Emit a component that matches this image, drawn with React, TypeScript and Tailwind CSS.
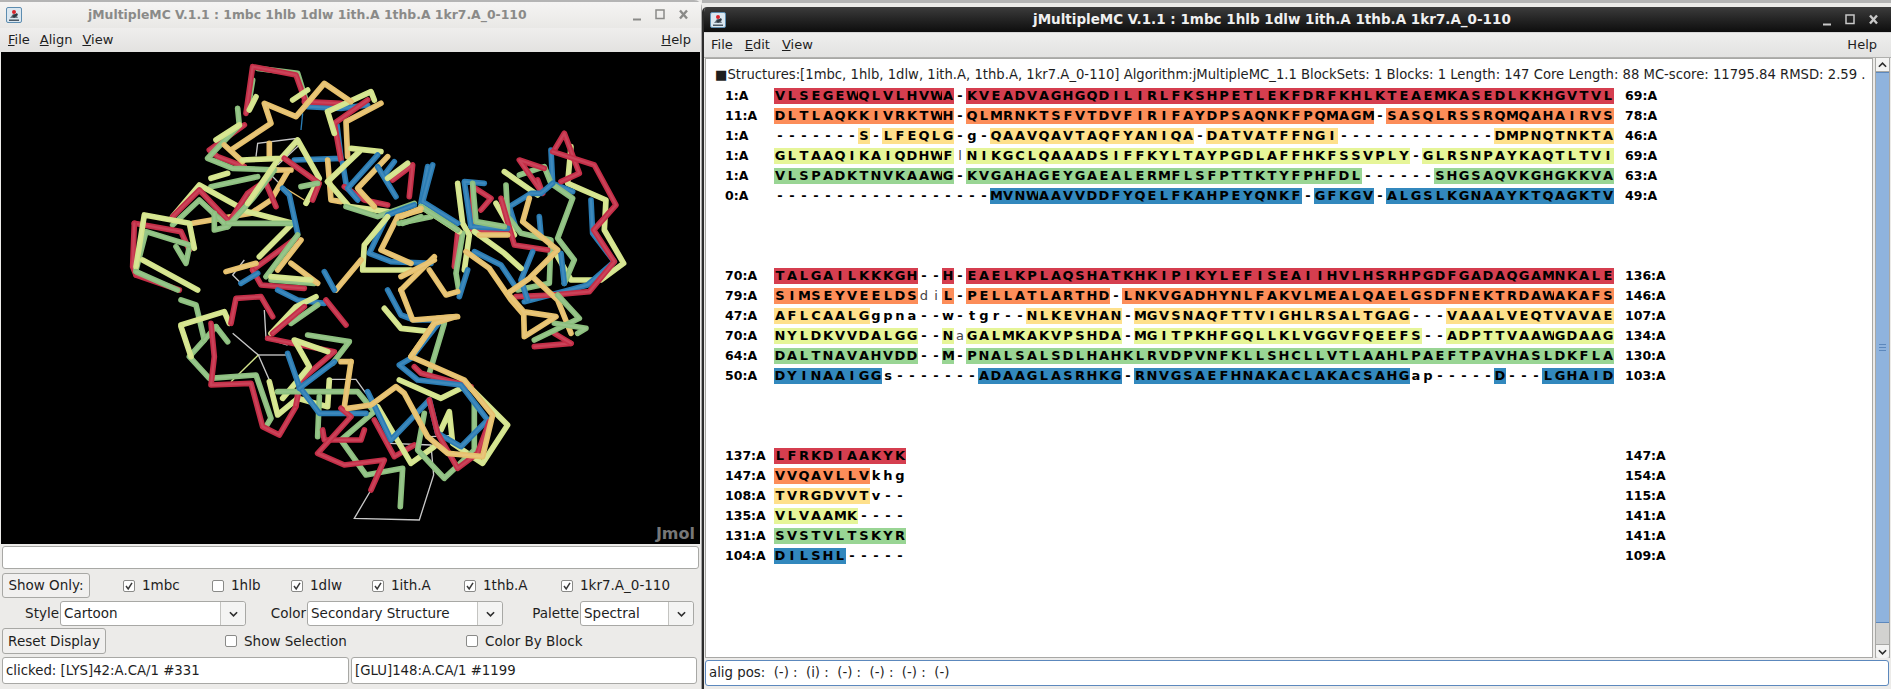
const COLORS = ['bg-[#d53e4f]', 'bg-[#fc8d59]', 'bg-[#fee08b]', 'bg-[#e6f598]', 'bg-[#99d594]', 'bg-[#3288bd]'];

// "~" marks the next residue as thin (the pale unaligned letters)
const BLOCKS = [
  {
    start: ['1:A', '11:A', '1:A', '1:A', '1:A', '0:A'],
    end: ['69:A', '78:A', '46:A', '69:A', '63:A', '49:A'],
    seqs: [
      'VLSEGEWQLVLHVWA-KVEADVAGHGQDILIRLFKSHPETLEKFDRFKHLKTEAEMKASEDLKKHGVTVL',
      'DLTLAQKKIVRKTWH-QLMRNKTSFVTDVFIRIFAYDPSAQNKFPQMAGM-SASQLRSSRQMQAHAIRVS',
      '-------S-LFEQLG-g-QAAVQAVTAQFYANIQA-DATVATFFNGI-------------DMPNQTNKTA',
      'GLTAAQIKAIQDHWF~lNIKGCLQAAADSIFFKYLTAYPGDLAFFHKFSSVPLY-GLRSNPAYKAQTLTVI',
      'VLSPADKTNVKAAWG-KVGAHAGEYGAEALERMFLSFPTTKTYFPHFDL------SHGSAQVKGHGKKVA',
      '------------------MVNWAAVVDDFYQELFKAHPEYQNKF-GFKGV-ALGSLKGNAAYKTQAGKTV',
    ],
  },
  {
    start: ['70:A', '79:A', '47:A', '70:A', '64:A', '50:A'],
    end: ['136:A', '146:A', '107:A', '134:A', '130:A', '103:A'],
    seqs: [
      'TALGAILKKKGH--H-EAELKPLAQSHATKHKIPIKYLEFISEAIIHVLHSRHPGDFGADAQGAMNKALE',
      'SIMSEYVEELDS~d~iL-PELLATLARTHD-LNKVGADHYNLFAKVLMEALQAELGSDFNEKTRDAWAKAFS',
      'AFLCAALGgpna--w-tgr--NLKEVHAN-MGVSNAQFTTVIGHLRSALTGAG---VAAALVEQTVAVAE',
      'NYLDKVVDALGG--N~aGALMKAKVPSHDA-MGITPKHFGQLLKLVGGVFQEEFS--ADPTTVAAWGDAAG',
      'DALTNAVAHVDD--M-PNALSALSDLHAHKLRVDPVNFKLLSHCLLVTLAAHLPAEFTPAVHASLDKFLA',
      'DYINAAIGGs-------ADAAGLASRHKG-RNVGSAEFHNAKACLAKACSAHGap-----D---LGHAID',
    ],
  },
  {
    start: ['137:A', '147:A', '108:A', '135:A', '131:A', '104:A'],
    end: ['147:A', '154:A', '115:A', '141:A', '141:A', '109:A'],
    seqs: ['LFRKDIAAKYK', 'VVQAVLLVkhg', 'TVRGDVVTv--', 'VLVAAMK----', 'SVSTVLTSKYR', 'DILSHL-----'],
  },
];

const R = '#c42e47';
const G = '#8cbf7e';
const T = '#e6c06c';
const Y = '#d4e48b';
const B = '#2a7cb4';
const W = '#c8c8c8';

type Strand = [string, string];

// traced from the viewer, each group in its own crop's coordinates (3x)
const TOP_LEFT: Strand[] = [
  [G, '470,55 590,70 615,150'],
  [G, '440,180 455,90'],
  [R, '435,190 455,50 585,75 612,150'],
  [B, '620,170 720,175 800,165'],
  [R, '610,155 720,160'],
  [B, '580,330 720,325 708,225'],
  [R, '800,150 700,220 720,330'],
  [Y, '680,185 810,125 820,150'],
  [Y, '680,185 700,250'],
  [T, '390,300 510,220 490,160 585,200 670,100 750,155'],
  [T, '840,160 735,215 740,320'],
  [Y, '575,150 620,120'],
  [Y, '445,180 465,140'],
  [R, '430,225 325,300 350,320 430,350'],
  [G, '410,175 415,225 320,325 395,355 530,360'],
  [Y, '345,270 415,225'],
  [T, '370,285 425,335'],
  [T, '505,280 505,320'],
  [Y, '425,330 540,325 590,270 655,385 615,460'],
  [R, '550,325 655,400 635,450'],
  [G, '600,410 650,400'],
  [G, '330,410 470,380'],
  [Y, '330,385 380,370'],
  [T, '560,365 510,450 450,490 275,520'],
  [T, '515,360 570,360'],
  [R, '495,400 525,470'],
  [Y, '215,500 295,405 440,485 575,520 475,620'],
  [R, '215,500 295,420 385,515 440,430 505,385'],
  [G, '215,525 295,450 380,530 460,440 520,360'],
  [G, '340,490 340,540 380,530'],
  [Y, '440,460 530,330'],
  [G, '380,520 580,520'],
  [B, '545,415 565,435 590,550'],
  [T, '680,330 690,450 720,455'],
  [B, '725,340 735,400'],
  [Y, '680,395 775,305'],
  [Y, '750,295 840,305'],
  [R, '730,410 790,450 860,465'],
  [Y, '680,395 745,470 860,485'],
  [B, '770,450 740,415 830,315'],
  [T, '860,320 770,415 820,470'],
  [B, '880,335 850,375'],
  [B, '830,350 885,440'],
  [R, '875,390 935,345 925,440'],
  [Y, '860,385 920,340'],
  [G, '735,470 830,500 940,460'],
  [B, '940,465 860,495 805,610 870,635 990,640'],
  [T, '960,480 890,500 840,600 930,640'],
  [G, '895,520 990,500'],
  [Y, '860,500 790,585 785,660 930,660'],
  [T, '1000,620 900,720'],
  [T, '780,630 705,720'],
  [B, '980,350 960,460'],
  [R, '100,520 240,545 265,600'],
  [R, '105,675 95,650 100,520'],
  [G, '225,590 255,640 265,590'],
  [G, '105,660 135,545 265,585'],
  [Y, '105,650 130,495 265,520 280,595'],
  [R, '105,675 235,720'],
  [Y, '125,630 290,720'],
  [G, '105,665 230,720'],
  [T, '600,570 530,660'],
  [R, '455,660 585,565'],
  [R, '455,660 480,705 610,715'],
  [G, '495,680 590,555'],
  [G, '510,690 640,700'],
  [T, '375,665 465,640'],
  [B, '420,700 470,670'],
  [T, '570,640 650,700'],
  [Y, '510,680 630,690'],
  [B, '670,665 700,720'],
];

const BOTTOM: Strand[] = [
  [G, '0,30 45,45 70,150 25,200 85,265 225,255 270,385 255,410'],
  [Y, '0,105 130,65 145,100'],
  [Y, '0,110 30,200'],
  [G, '105,110 140,155'],
  [G, '105,110 70,150'],
  [R, '150,100 165,25 240,20 275,80'],
  [R, '90,100 100,200 90,285 210,280 245,410 295,435 345,350 350,310'],
  [B, '290,0 350,30 430,40'],
  [Y, '270,130 345,50 405,20'],
  [G, '410,45 330,100'],
  [R, '275,130 370,50'],
  [R, '435,30 495,105'],
  [Y, '265,275 290,375 350,325 440,350 445,270'],
  [G, '380,135 505,155 455,220'],
  [R, '260,145 460,185 360,270 345,345'],
  [Y, '305,325 385,230 340,150 440,185'],
  [G, '290,305 530,305 580,365 480,450 555,555 665,535 658,650'],
  [G, '410,440 415,320'],
  [T, '510,215 480,215'],
  [T, '510,215 490,350'],
  [B, '320,190 355,290 415,370 555,370'],
  [B, '460,215 355,295'],
  [R, '425,420 430,450 540,450 550,420'],
  [R, '480,355 510,380 410,490 490,525 610,510 570,600'],
  [R, '580,390 640,500 700,465'],
  [Y, '590,350 690,520 760,470'],
  [B, '620,0 660,75 700,90 770,90'],
  [Y, '610,55 660,115 750,125'],
  [G, '790,100 745,250'],
  [Y, '655,270 780,325 860,285 980,405 905,520 815,460 805,365 780,420'],
  [G, '730,370 710,480 790,565 880,480 880,340'],
  [R, '700,230 720,250 870,290'],
  [B, '780,90 690,205 655,225 710,270 840,285 920,390 840,470 770,430 745,330 630,450 560,305'],
  [R, '745,330 770,430 830,535 890,490 925,395'],
  [T, '830,80 770,85 690,200 850,270 935,375 905,500 800,490 740,440 670,310 645,290 570,345 500,355'],
];

const RIGHT: Strand[] = [
  [Y, '510,80 500,190 615,240 610,330 668,430 600,480 510,480 470,410'],
  [B, '450,90 455,190 515,215'],
  [B, '570,240 575,340 640,425 560,495 505,510 370,545'],
  [R, '460,90 490,40 535,160 480,185'],
  [R, '455,95 580,135 645,255 578,330 640,425 565,515 455,525 345,530'],
  [G, '355,165 430,140 450,190 515,235 470,355 520,420 490,490'],
  [R, '410,180 425,220 355,120 430,145'],
  [Y, '310,155 410,225'],
  [B, '455,190 420,220 390,220 325,260 345,325'],
  [B, '415,290 420,345'],
  [G, '315,195 320,290 360,340 450,360 445,490 350,510'],
  [Y, '285,250 340,345'],
  [R, '300,235 340,375 440,390'],
  [B, '395,395 360,480 380,540'],
  [B, '480,400 490,490'],
  [R, '240,270 270,235 215,200 215,330 320,340'],
  [Y, '170,190 185,310 205,345 190,450'],
  [B, '250,190 190,185 210,320 320,325'],
  [G, '215,190 225,305 310,320'],
  [R, '170,340 160,440'],
  [G, '185,340 165,460 175,520'],
  [B, '220,395 300,435 340,495'],
  [B, '200,450 175,530'],
  [Y, '220,335 310,400 360,445'],
  [T, '235,345 320,345'],
  [B, '95,135 65,245 170,310'],
  [Y, '60,260 175,335'],
  [G, '5,310 60,290'],
  [G, '60,260 170,330'],
  [T, '0,290 60,265'],
  [T, '100,420 0,470'],
  [T, '85,450 135,525 170,515'],
  [T, '0,510 35,600 165,590 100,610 30,710'],
  [T, '400,475 470,540 510,640'],
  [R, '510,670 400,680'],
  [R, '510,670 460,640'],
  [G, '470,525 535,595 400,660'],
  [G, '460,610 555,625 530,640'],
  [T, '195,395 265,445 330,540 365,580'],
  [T, '385,235 365,305 470,390 385,475 320,520 368,575 370,650 465,590 365,575'],
];

const THIN_LINES: [string, string, string][] = [
  ['translate(100 -2)', W, '465,320 470,280 590,265 595,285 530,345'],
  ['translate(100 -2)', B, '600,240 605,190'],
  ['translate(100 -2)', W, '510,375 545,410'],
  ['translate(100 -2)', T, '545,410 610,450'],
  ['translate(100 -2)', W, '430,630 395,675 420,700'],
  ['translate(180 238)', W, '250,60 255,145 320,165'],
  ['translate(180 238)', W, '155,130 232,195 265,270'],
  ['translate(180 238)', Y, '232,195 150,275'],
  ['translate(180 238)', W, '232,195 320,195'],
  ['translate(180 238)', W, '445,268 525,268 555,310'],
  ['translate(180 238)', W, '625,460 750,465 758,555 715,690 520,685 570,600'],
  ['translate(180 238)', W, '750,440 805,437'],
];

function Tubes({ items, at }: { items: Strand[]; at: string }) {
  return (
    <g transform={`${at} scale(0.3333)`} fill="none" strokeLinecap="round" strokeLinejoin="round">
      {items.map(([color, points], i) => (
        <g key={i}>
          <polyline points={points} stroke={color} strokeWidth="17" />
          <polyline points={points} stroke="#ffffff" strokeOpacity="0.1" strokeWidth="7" />
        </g>
      ))}
    </g>
  );
}

function Protein() {
  return (
    <svg viewBox="0 0 700 492" className="absolute inset-0 w-[700px] h-[492px]">
      {THIN_LINES.map(([at, color, points], i) => (
        <polyline key={i} transform={`${at} scale(0.3333)`} points={points} fill="none" stroke={color} strokeWidth="4" />
      ))}
      <Tubes items={TOP_LEFT} at="translate(100 -2)" />
      <Tubes items={BOTTOM} at="translate(180 238)" />
      <Tubes items={RIGHT} at="translate(400 68)" />
    </svg>
  );
}

function AppIcon() {
  return (
    <svg viewBox="0 0 16 16" className="w-[16px] h-[16px] shrink-0">
      <rect x="0.5" y="0.5" width="15" height="15" rx="1.5" fill="#dbe7f0" stroke="#5d8db0" />
      <path d="M3 12.5h10v1.5H3z" fill="#4d5a66" />
      <path d="M4 11l3-4h3l2 4z" fill="#6f7b86" />
      <path d="M6 9l5-3 1 2-4 3z" fill="#2f3a44" />
      <circle cx="8" cy="5" r="2" fill="#d8242c" />
    </svg>
  );
}

function WindowControls({ color }: { color: string }) {
  return (
    <svg viewBox="0 0 62 12" className="w-[62px] h-[12px]" fill="none" stroke={color}>
      <path d="M0 10.5h8" strokeWidth="2" />
      <rect x="23" y="1" width="8" height="8.5" strokeWidth="1.5" />
      <path d="M47 1.5l7 8M54 1.5l-7 8" strokeWidth="2.4" />
    </svg>
  );
}

function Check({ label, checked, className }: { label: string; checked?: boolean; className: string }) {
  return (
    <div className={`flex items-center gap-[7px] ${className}`}>
      <span className="flex items-center justify-center w-[12px] h-[12px] border border-[#8a8a88] rounded-[2px] bg-white shrink-0">
        {checked && (
          <svg viewBox="0 0 10 10" className="w-[10px] h-[10px]" fill="none" stroke="#3a3a3a" strokeWidth="1.5">
            <path d="M2 5l2.2 3L8 1.8" />
          </svg>
        )}
      </span>
      <span>{label}</span>
    </div>
  );
}

function Combo({ value, className }: { value: string; className: string }) {
  return (
    <div className={`flex h-[25px] bg-white border border-[#a8a8a5] rounded-[3px] ${className}`}>
      <span className="flex-1 pl-[3px] leading-[23px] overflow-hidden whitespace-nowrap">{value}</span>
      <span className="flex items-center justify-center w-[25px] border-l border-[#c4c4c1] bg-[#f4f4f3] rounded-r-[3px]">
        <svg viewBox="0 0 10 6" className="w-[9px] h-[6px]" fill="none" stroke="#2e2e2e" strokeWidth="1.8">
          <path d="M1 1l4 4 4-4" />
        </svg>
      </span>
    </div>
  );
}

function Field({ value, className }: { value?: string; className: string }) {
  return (
    <div className={`bg-white border border-[#a8a8a5] rounded-[3px] px-[3px] flex items-center whitespace-nowrap ${className}`}>
      {value}
    </div>
  );
}

function SeqRow({ seq, color, start, end }: { seq: string; color: string; start: string; end: string }) {
  const cells: { ch: string; thin: boolean }[] = [];
  let thin = false;
  for (const ch of seq) {
    if (ch === '~') {
      thin = true;
      continue;
    }
    cells.push({ ch, thin });
    thin = false;
  }
  return (
    <div className="flex h-[20px] text-[12.5px] font-bold text-black leading-[16px]">
      <span className="w-[68px] pl-[19px] whitespace-nowrap">{start}</span>
      <div className="flex w-[840px]">
        {cells.map((cell, i) => {
          const aligned = /[A-Z]/.test(cell.ch);
          return (
            <span
              key={i}
              className={`w-[12px] h-[16px] text-center shrink-0 text-[13px] ${aligned ? color : ''} ${cell.thin ? 'font-normal text-[#444]' : ''}`}
            >
              {cell.ch}
            </span>
          );
        })}
      </div>
      <span className="ml-[11px] whitespace-nowrap">{end}</span>
    </div>
  );
}

export default function App() {
  return (
    <div className="flex w-[1891px] h-[689px] bg-[#ecebe9] text-[13.5px] text-[#1e1e1e] font-['DejaVu_Sans',sans-serif] overflow-hidden">
      {/* ── Left window: Jmol viewer ───────────────────────── */}
      <div className="flex flex-col w-[702px] shrink-0 border-t-[2px] border-[#b4b4b4] rounded-tr-[8px] border-r border-r-[#a5a5a5]">
        <div className="flex items-center h-[26px] px-[6px] bg-gradient-to-b from-[#f5f4f3] to-[#e9e8e6]">
          <AppIcon />
          <span className="ml-[66px] w-[500px] font-bold text-[12.4px] text-[#8a8a88] whitespace-nowrap">
            jMultipleMC V.1.1 : 1mbc 1hlb 1dlw 1ith.A 1thb.A 1kr7.A_0-110
          </span>
          <div className="ml-auto">
            <WindowControls color="#8a8a88" />
          </div>
        </div>
        <div className="flex items-center gap-[10px] h-[24px] px-[8px] text-[13px] bg-gradient-to-b from-[#efeeed] to-[#e3e2e0]">
          <span><span className="underline">F</span>ile</span>
          <span><span className="underline">A</span>lign</span>
          <span><span className="underline">V</span>iew</span>
          <span className="ml-auto mr-[2px]"><span className="underline">H</span>elp</span>
        </div>
        <div className="relative h-[492px] bg-black overflow-hidden mx-[1px]">
          <Protein />
          <span className="absolute right-[5px] bottom-[-2px] font-bold text-[16px] text-[#777]">Jmol</span>
        </div>
        <Field className="h-[23px] mt-[2px] ml-[2px] mr-[2px]" />
        <div className="flex items-center h-[25px] mt-[4px] ml-[2px]">
          <button className="w-[88px] h-[25px] border border-[#a8a8a5] rounded-[3px] bg-[#f1f0ef]">Show Only:</button>
          <Check label="1mbc" checked className="w-[89px] ml-[33px]" />
          <Check label="1hlb" className="w-[79px]" />
          <Check label="1dlw" checked className="w-[81px]" />
          <Check label="1ith.A" checked className="w-[92px]" />
          <Check label="1thb.A" checked className="w-[97px]" />
          <Check label="1kr7.A_0-110" checked />
        </div>
        <div className="flex items-center h-[25px] mt-[3px]">
          <span className="w-[60px] text-right pr-[1px]">Style</span>
          <Combo value="Cartoon" className="w-[186px]" />
          <span className="w-[61px] text-right pr-[1px]">Color</span>
          <Combo value="Secondary Structure" className="w-[196px]" />
          <span className="w-[77px] text-right pr-[1px]">Palette</span>
          <Combo value="Spectral" className="w-[114px]" />
        </div>
        <div className="flex items-center h-[26px] mt-[2px] ml-[2px]">
          <button className="w-[104px] h-[26px] border border-[#a8a8a5] rounded-[3px] bg-[#f1f0ef]">Reset Display</button>
          <Check label="Show Selection" className="w-[241px] ml-[119px]" />
          <Check label="Color By Block" />
        </div>
        <div className="flex h-[27px] mt-[3px] mx-[2px] gap-[2px] text-[13.3px]">
          <Field value="clicked: [LYS]42:A.CA/1 #331" className="w-[347px]" />
          <Field value="[GLU]148:A.CA/1 #1199" className="w-[346px]" />
        </div>
      </div>

      {/* ── Right window: alignment ────────────────────────── */}
      <div className="flex-1 border-t-[3px] border-[#b4b4b4] pt-[4px]">
        <div className="flex flex-col h-[682px] bg-[#ecebe9] border-l-[2px] border-[#2c2c2c] rounded-tl-[5px] overflow-hidden">
          <div className="flex items-center h-[26px] px-[6px] border-b border-[#d8d8d8] bg-gradient-to-b from-[#3c3c3c] to-[#0e0e0e]">
            <AppIcon />
            <span className="ml-[307px] w-[500px] font-bold text-[13.5px] text-[#f0f0f0] whitespace-nowrap">
              jMultipleMC V.1.1 : 1mbc 1hlb 1dlw 1ith.A 1thb.A 1kr7.A_0-110
            </span>
            <div className="ml-auto">
              <WindowControls color="#c8c8c8" />
            </div>
          </div>
          <div className="flex items-center gap-[12px] h-[25px] px-[7px] text-[13px] bg-gradient-to-b from-[#efefee] to-[#e2e2e1] border-b border-[#b0b0ae]">
            <span>File</span>
            <span><span className="underline">E</span>dit</span>
            <span><span className="underline">V</span>iew</span>
            <span className="ml-auto mr-[7px]">Help</span>
          </div>
          <div className="flex h-[600px] shrink-0">
            <div className="w-[1168px] ml-[1px] bg-white border border-[#a8a8a5] overflow-hidden">
              <div className="h-[29px] pl-[9px] pt-[6px] whitespace-nowrap text-[13.2px] text-[#1e1e1e]">
                ■Structures:[1mbc, 1hlb, 1dlw, 1ith.A, 1thb.A, 1kr7.A_0-110] Algorithm:jMultipleMC_1.1 BlockSets: 1 Blocks: 1 Length: 147 Core Length: 88 MC-score: 11795.84 RMSD: 2.59 .
              </div>
              <div className="flex flex-col gap-[60px]">
                {BLOCKS.map((block, b) => (
                  <div key={b}>
                    {block.seqs.map((seq, i) => (
                      <SeqRow key={i} seq={seq} color={COLORS[i]} start={block.start[i]} end={block.end[i]} />
                    ))}
                  </div>
                ))}
              </div>
            </div>
            <div className="flex flex-col w-[15px] ml-[2px] bg-[#d2d2d0] border-x border-[#a8a8a5]">
              <span className="flex items-center justify-center h-[14px] bg-[#f4f4f3] border-b border-[#a8a8a5]">
                <svg viewBox="0 0 10 6" className="w-[9px] h-[6px]" fill="none" stroke="#2e2e2e" strokeWidth="1.8">
                  <path d="M1 5l4-4 4 4" />
                </svg>
              </span>
              <div className="flex flex-col justify-center gap-[2px] items-center h-[551px] bg-[#8fb3dd] border-y border-[#5c88bd]">
                <span className="w-[7px] h-[1px] bg-[#5c88bd]" />
                <span className="w-[7px] h-[1px] bg-[#5c88bd]" />
                <span className="w-[7px] h-[1px] bg-[#5c88bd]" />
              </div>
              <div className="flex-1" />
              <span className="flex items-center justify-center h-[14px] bg-[#f4f4f3] border-t border-[#a8a8a5] rounded-b-[3px]">
                <svg viewBox="0 0 10 6" className="w-[9px] h-[6px]" fill="none" stroke="#2e2e2e" strokeWidth="1.8">
                  <path d="M1 1l4 4 4-4" />
                </svg>
              </span>
            </div>
          </div>
          <div className="flex items-center h-[26px] shrink-0 mt-[2px] ml-[1px] mr-[2px] px-[3px] bg-white border border-[#5c88bd] rounded-[3px] text-[13.3px] whitespace-pre">
            alig pos:  (-) :  (i) :  (-) :  (-) :  (-) :  (-)
          </div>
        </div>
      </div>
    </div>
  );
}
